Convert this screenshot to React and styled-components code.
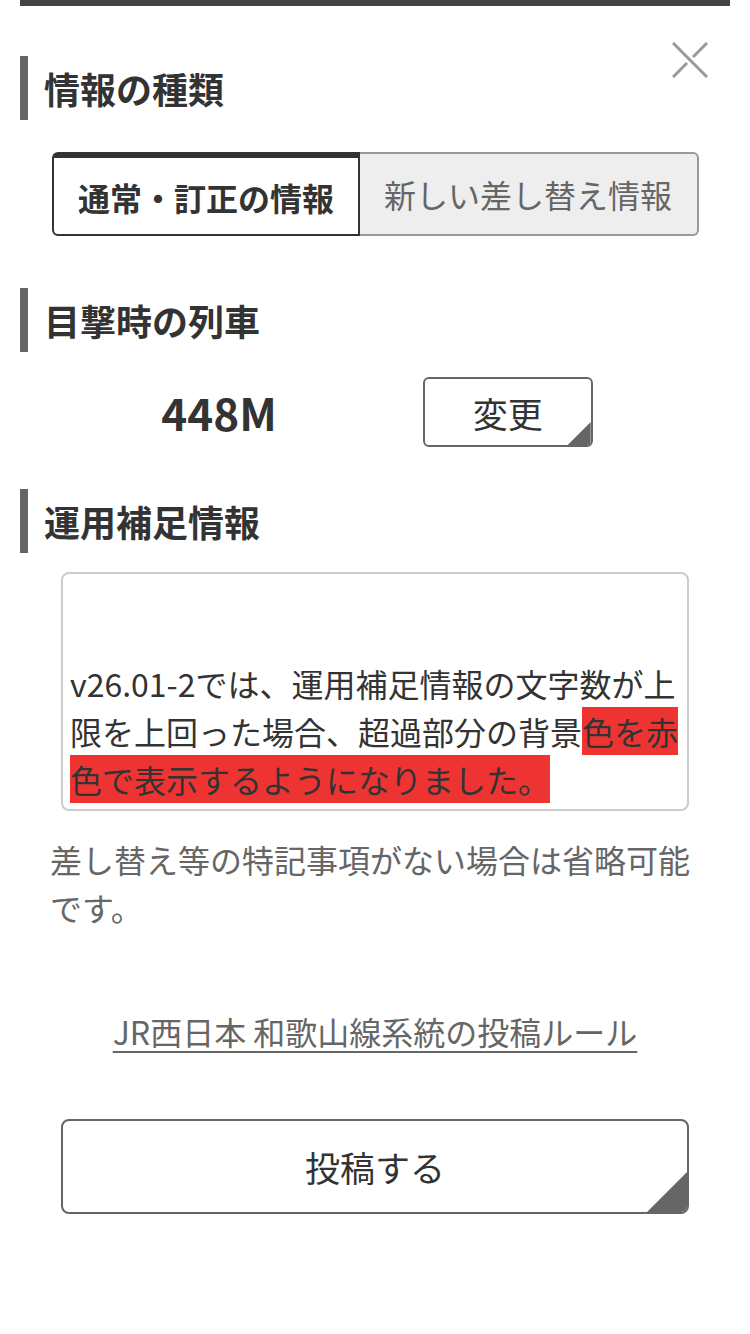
import React from "react";
import styled, { createGlobalStyle } from "styled-components";

const GlobalStyle = createGlobalStyle`
  html, body {
    margin: 0;
    padding: 0;
    background: #ffffff;
  }
  body {
    font-family: "Noto Sans CJK JP", "Noto Sans", sans-serif;
    color: #333333;
  }
`;

const Page = styled.div`
  position: relative;
  padding: 0 20px;
  min-height: 1334px;
  box-sizing: border-box;
`;

const TopBar = styled.div`
  height: 6px;
  background: #444444;
`;

const CloseButton = styled.button`
  position: absolute;
  top: 42px;
  right: 42px;
  width: 36px;
  height: 36px;
  padding: 0;
  border: none;
  background: transparent;
  cursor: pointer;
  svg {
    display: block;
  }
`;

const SectionHeading = styled.h2`
  margin: ${(p) => p.$top}px 0 0;
  height: 64px;
  display: flex;
  align-items: center;
  border-left: 8px solid #666666;
  padding-left: 16px;
  font-size: 36px;
  font-weight: 700;
  color: #333333;
  line-height: 1;
`;

const Tabs = styled.div`
  display: flex;
  margin: 32px 0 0 32px;
  width: max-content;
`;

const Tab = styled.button`
  height: 84px;
  box-sizing: border-box;
  padding: 0 24px;
  font-family: inherit;
  font-size: 32px;
  line-height: 1;
  cursor: pointer;
  ${(p) =>
    p.$active
      ? `
    background: #ffffff;
    color: #333333;
    font-weight: 700;
    border: 2px solid #333333;
    border-top-width: 6px;
    border-radius: 6px 0 0 6px;
    padding-top: 2px;
  `
      : `
    background: #eeeeee;
    color: #666666;
    font-weight: 400;
    border: 2px solid #999999;
    border-left: none;
    border-radius: 0 6px 6px 0;
    padding-left: 24px;
    padding-right: 25px;
  `}
`;

const TrainRow = styled.div`
  margin-top: 25px;
  padding-left: 4px;
  display: flex;
  justify-content: center;
  align-items: center;
  gap: 146px;
`;

const TrainNumber = styled.div`
  font-size: 44px;
  font-weight: 700;
  color: #333333;
  line-height: 1;
`;

const CornerButton = styled.button`
  position: relative;
  overflow: hidden;
  box-sizing: border-box;
  width: ${(p) => p.$width};
  height: ${(p) => p.$height}px;
  background: #ffffff;
  border: 2px solid #666666;
  border-radius: ${(p) => p.$radius}px;
  font-family: inherit;
  font-size: 35px;
  color: #333333;
  line-height: 1;
  padding: 0;
  cursor: pointer;
  &::after {
    content: "";
    position: absolute;
    right: 0;
    bottom: 0;
    width: ${(p) => p.$corner}px;
    height: ${(p) => p.$corner}px;
    background: #666666;
    clip-path: polygon(100% 0, 100% 100%, 0 100%);
  }
`;

const TextBox = styled.div`
  margin: 19px 41px 0;
  height: 239px;
  box-sizing: border-box;
  border: 2px solid #cccccc;
  border-radius: 8px;
  padding: 0 7px 6px;
  display: flex;
  flex-direction: column;
  justify-content: flex-end;
  font-size: 32px;
  line-height: 48px;
  color: #333333;
  overflow: hidden;
`;

const Overflow = styled.span`
  background: #ee3333;
  padding: 1px 0;
  -webkit-box-decoration-break: clone;
  box-decoration-break: clone;
`;

const Helper = styled.p`
  margin: 24px 0 0 30px;
  width: 650px;
  font-size: 32px;
  line-height: 48px;
  color: #666666;
`;

const RuleLink = styled.a`
  display: block;
  margin-top: 76px;
  text-align: center;
  font-size: 32px;
  line-height: 48px;
  color: #666666;
  text-decoration: underline;
  text-decoration-thickness: 2px;
  text-underline-offset: 6px;
`;

const SubmitWrap = styled.div`
  margin: 64px 41px 0;
`;

export default function App() {
  return (
    <>
      <GlobalStyle />
      <Page>
        <TopBar />
        <CloseButton aria-label="閉じる">
          <svg width="36" height="36" viewBox="0 0 36 36">
            <line x1="1" y1="1" x2="35" y2="35" stroke="#999999" strokeWidth="3" />
            <line x1="35" y1="1" x2="21" y2="15" stroke="#999999" strokeWidth="3" />
            <line x1="15" y1="21" x2="1" y2="35" stroke="#999999" strokeWidth="3" />
          </svg>
        </CloseButton>

        <SectionHeading $top={50}>情報の種類</SectionHeading>
        <Tabs>
          <Tab $active>通常・訂正の情報</Tab>
          <Tab>新しい差し替え情報</Tab>
        </Tabs>

        <SectionHeading $top={52}>目撃時の列車</SectionHeading>
        <TrainRow>
          <TrainNumber>448M</TrainNumber>
          <CornerButton $width="170px" $height={70} $radius={6} $corner={23}>
            変更
          </CornerButton>
        </TrainRow>

        <SectionHeading $top={42}>運用補足情報</SectionHeading>
        <TextBox>
          <div>
            v26.01-2では、運用補足情報の文字数が上限を上回った場合、超過部分の背景
            <Overflow>色を赤色で表示するようになりました。</Overflow>
          </div>
        </TextBox>
        <Helper>差し替え等の特記事項がない場合は省略可能です。</Helper>

        <RuleLink href="#">JR西日本 和歌山線系統の投稿ルール</RuleLink>

        <SubmitWrap>
          <CornerButton $width="100%" $height={95} $radius={8} $corner={40}>
            投稿する
          </CornerButton>
        </SubmitWrap>
      </Page>
    </>
  );
}
